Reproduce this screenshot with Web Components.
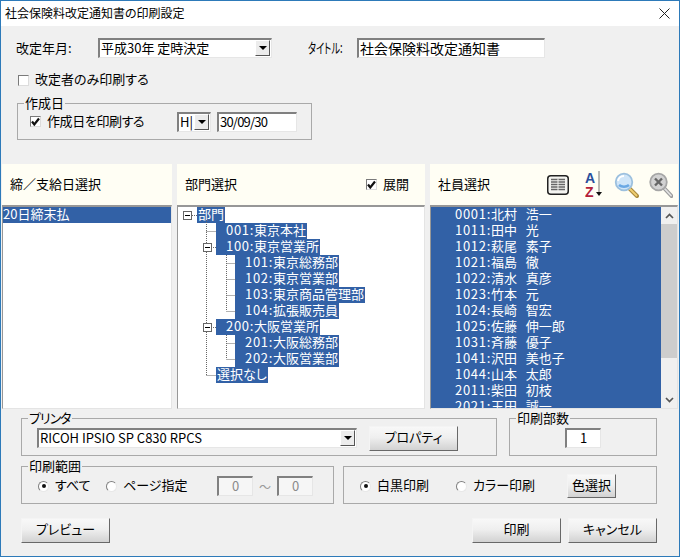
<!DOCTYPE html>
<html lang="ja">
<head>
<meta charset="utf-8">
<title>社会保険料改定通知書の印刷設定</title>
<style>
html, body { margin: 0; background: #f0f0f0; }
body { font: 13px "Noto Sans CJK JP", sans-serif; color: #000; font-feature-settings: "palt"; }
</style>
</head>
<body>
<print-dialog></print-dialog>
<script>
function define(name, css, html, init) {
  const tpl = document.createElement("template");
  tpl.innerHTML = `<style>${css}</style>${html}`;
  customElements.define(name, class extends HTMLElement {
    constructor() {
      super();
      this.attachShadow({ mode: "open" });
      this.shadowRoot.appendChild(tpl.content.cloneNode(true));
    }
    connectedCallback() {
      if (init) init(this, this.shadowRoot);
    }
  });
}

const checkMark = `<svg width="11" height="11" viewBox="0 0 11 11"><path d="M2 5.500 4.300 8.500 9 2.500" fill="none" stroke="#111" stroke-width="2.200"/></svg>`;

define("title-bar", `
  :host { display: flex; align-items: center; justify-content: space-between; height: 25px; box-sizing: border-box; background: #fff;
    padding: 0 9px 2px 4px; font-size: 12px; line-height: 16px; }
  svg { display: block; margin-top: 2px; }
`, `<slot></slot><svg width="11" height="11" viewBox="0 0 11 11"><path d="M.5.5l10 10M10.500.5l-10 10" stroke="#222" fill="none"/></svg>`);

define("group-box", `
  :host { display: flex; align-items: center; position: relative; box-sizing: border-box; border: 1px solid #a9a9a9; height: 38px; padding-top: 2px; }
  span { position: absolute; left: 6px; top: -9px; padding: 0 1px; background: #f0f0f0; line-height: 16px; letter-spacing: var(--legend-spacing, 0); }
`, `<span></span><slot></slot>`, (el, root) => {
  root.querySelector("span").textContent = el.getAttribute("legend");
});

define("text-field", `
  :host { display: block; box-sizing: border-box; height: 20px; padding-left: 1px; background: #fff; line-height: 16px; white-space: nowrap; overflow: hidden;
    border: 2px solid; border-color: #808080 #e6e6e6 #e6e6e6 #808080; border-width: 2px 1px 1px 2px; }
  :host([center]) { text-align: center; padding-left: 0; }
  :host([disabled]) { color: #8a8a8a; background: #f6f6f6; }
`, `<slot></slot>`);

define("combo-box", `
  :host { display: flex; box-sizing: border-box; height: 20px; background: #fff; line-height: 16px; white-space: nowrap;
    border: 2px solid; border-color: #808080 #e6e6e6 #e6e6e6 #808080; border-width: 2px 1px 1px 2px; }
  div { flex: 1; min-width: 0; overflow: hidden; padding-left: 1px; }
  b { flex: none; width: 15px; margin: 0 1px 1px 0; box-sizing: border-box; display: flex; align-items: center; justify-content: center;
    background: #ececec; border: 1px solid; border-color: #fff #555 #555 #fff; }
  i { border: 4px solid transparent; border-top: 4px solid #000; border-bottom: 0; }
`, `<div><slot></slot></div><b><i></i></b>`);

define("check-box", `
  :host { display: inline-flex; align-items: center; gap: 6px; line-height: 16px; white-space: nowrap; }
  span { display: block; box-sizing: border-box; width: 11px; height: 11px; background: #fff; border: 1px solid; border-color: #7a7a7a #dcdcdc #dcdcdc #7a7a7a; }
  svg { display: block; margin: -1px 0 0 -1px; }
  div { margin-top: -2px; }
`, `<span></span><div><slot></slot></div>`, (el, root) => {
  if (el.hasAttribute("checked")) root.querySelector("span").innerHTML = checkMark;
});

define("radio-button", `
  :host { display: inline-flex; align-items: center; gap: 6px; line-height: 16px; white-space: nowrap; }
  span { display: flex; align-items: center; justify-content: center; box-sizing: border-box; width: 11px; height: 11px; border-radius: 50%;
    background: #fff; border: 1px solid; border-color: #808080 #e8e8e8 #e8e8e8 #808080; }
  i { width: 4px; height: 4px; border-radius: 50%; background: #111; }
  div { margin-top: -3px; }
`, `<span></span><div><slot></slot></div>`, (el, root) => {
  if (el.hasAttribute("checked")) root.querySelector("span").innerHTML = "<i></i>";
});

define("push-button", `
  :host { display: flex; align-items: center; justify-content: center; box-sizing: border-box; width: 89px; height: 25px; line-height: 16px; padding-bottom: 3px;
    background: linear-gradient(#f8f8f8, #efefef 45%, #d2d2d2); border: 1px solid; border-color: #f4f4f4 #686868 #686868 #f4f4f4; white-space: nowrap; }
`, `<slot></slot>`);

define("pane-header", `
  :host { display: flex; align-items: center; box-sizing: border-box; height: 41px; padding: 0 5px 0 8px; background: #fffef4; white-space: nowrap; }
  .label { margin-top: -3px; }
  .end { margin-left: auto; display: flex; align-items: center; }
`, `<div class="label"><slot></slot></div><div class="end"><slot name="end"></slot></div>`);

define("list-pane", `
  :host { display: block; position: relative; box-sizing: border-box; height: 204px; overflow: hidden; background: #fff;
    border: 1px solid #e4e4e4; border-top: 2px solid #979797; border-left: 1px solid #979797; }
`, `<slot></slot>`);

define("list-row", `
  :host { display: block; height: 16px; line-height: 13px; padding-left: 24px; white-space: pre; color: #fff; background: #3261a6; }
  :host([flush]) { padding-left: 0; line-height: 14px; }
`, `<slot></slot>`);

define("tree-node", `
  :host { display: block; height: 16px; line-height: 14px; padding-left: calc(19px + 19px * var(--level, 0)); white-space: pre; }
  span { display: inline-block; height: 16px; background: #3261a6; color: #fff; padding-right: 1px; padding-left: 1px; }
  :host([pad]) span { padding-left: 10px; }
`, `<span><slot></slot></span>`, (el) => {
  el.style.setProperty("--level", el.getAttribute("level") || 0);
});

define("scroll-bar", `
  :host { display: flex; flex-direction: column; position: absolute; right: 0; top: 0; bottom: 0; width: 16px; background: #f0f0f0; }
  svg { flex: none; display: block; }
  .btn { height: 17px; display: flex; align-items: center; justify-content: center; }
  .thumb { height: 134px; background: #cdcdcd; }
  .rest { flex: 1; }
`, `<div class="btn"><svg width="9" height="6" viewBox="0 0 9 6"><path d="M1 5l3.500-3.500L8 5" fill="none" stroke="#555" stroke-width="1.700"/></svg></div>
<div class="thumb"></div><div class="rest"></div>
<div class="btn"><svg width="9" height="6" viewBox="0 0 9 6"><path d="M1 1l3.500 3.500L8 1" fill="none" stroke="#555" stroke-width="1.700"/></svg></div>`);

define("tree-view", `
  :host { display: block; position: relative; }
  svg { position: absolute; left: 0; top: 0; }
  .dot { stroke: #666; stroke-dasharray: 1 1; fill: none; }
  .box { fill: #fff; stroke: #666; }
  .minus { stroke: #000; }
`, `<svg width="245" height="198" viewBox="178 207 245 198">
  <path class="dot" d="M192 215.500h5M206.500 220v155M206.500 231.500h10M211 247.500h5M226.500 255v56M226.500 263.500h9M226.500 279.500h9M226.500 295.500h9M226.500 311.500h9M211 327.500h5M226.500 335v24M226.500 343.500h9M226.500 359.500h9M206.500 375.500h10"/>
  <rect class="box" x="183.500" y="211.500" width="8" height="8"/><path class="minus" d="M185 215.500h5"/>
  <rect class="box" x="203.500" y="243.500" width="8" height="8"/><path class="minus" d="M205 247.500h5"/>
  <rect class="box" x="203.500" y="323.500" width="8" height="8"/><path class="minus" d="M205 327.500h5"/>
</svg><slot></slot>`);

define("print-dialog", `
  :host { display: flex; flex-direction: column; box-sizing: border-box; width: 680px; height: 557px; overflow: hidden; background: #f0f0f0; border: 1px solid #2d7ab9; }
  .top { height: 138px; box-sizing: border-box; padding: 12px 0 0 15px; }
  .row1 { display: flex; align-items: center; height: 20px; }
  .lbl-rev { width: 82px; margin-top: -2px; }
  .combo-rev { width: 174px; }
  .lbl-title { margin-left: 36px; width: 49px; margin-top: -2px; }
  .lbl-title span { display: inline-block; font-size: 14px; transform: scaleX(.66); transform-origin: left; white-space: nowrap; }
  .field-title { width: 188px; font-size: 14px; }
  .only { display: flex; margin: 14px 0 0 2px; height: 16px; }
  .made { width: 295px; margin: 15px 0 0 1px; height: 37px; padding: 0 0 0 12px; }
  .made-check { width: 147px; letter-spacing: -.4px; }
  .era { width: 34px; }
  .date { width: 80px; margin-left: 6px; letter-spacing: -.8px; }
  .panes { display: flex; gap: 5px; padding-left: 1px; }
  .p1 { width: 170px; } .p2 { width: 248px; } .p3 { width: 248px; }
  .emp { background: #3261a6; }
  .n { letter-spacing: .7px; }
  .icon-list { margin-right: 16px; } .icon-az { margin-right: 12px; } .icon-find { margin-right: 10px; }
  svg { display: block; }
  .bottom { padding: 9px 22px 0 20px; }
  .line { display: flex; justify-content: space-between; }
  .line + .line { margin-top: 10px; }
  .printer { width: 476px; padding-left: 15px; --legend-spacing: -1px; }
  .printer combo-box { width: 320px; margin-right: 12px; }
  .copies { width: 148px; justify-content: center; }
  .copies text-field { width: 36px; }
  .range { width: 313px; padding-left: 16px; }
  .mono { width: 314px; padding-left: 16px; }
  .r1 { width: 68px; } .r2 { width: 111px; }
  .r3 { width: 96px; } .r4 { width: 111px; }
  .num { width: 36px; }
  .wave { width: 24px; text-align: center; color: #999; font-size: 12px; }
  .pick { width: 49px; height: 24px; }
  .actions { display: flex; gap: 7px; margin-top: 14px; }
  .actions .gap { flex: 1; }
`, `
<title-bar>社会保険料改定通知書の印刷設定</title-bar>
<div class="top">
  <div class="row1">
    <span class="lbl-rev">改定年月:</span>
    <combo-box class="combo-rev">平成30年 定時決定</combo-box>
    <span class="lbl-title"><span>タイトル:</span></span>
    <text-field class="field-title">社会保険料改定通知書</text-field>
  </div>
  <div class="only"><check-box>改定者のみ印刷する</check-box></div>
  <group-box class="made" legend="作成日">
    <check-box class="made-check" checked>作成日を印刷する</check-box>
    <combo-box class="era">H|</combo-box>
    <text-field class="date">30/09/30</text-field>
  </group-box>
</div>
<div class="panes">
  <div class="p1">
    <pane-header>締／支給日選択</pane-header>
    <list-pane><list-row flush>20日締末払</list-row></list-pane>
  </div>
  <div class="p2">
    <pane-header style="padding-right:16px">部門選択
      <check-box slot="end" checked>展開</check-box>
    </pane-header>
    <list-pane>
      <tree-view>
        <tree-node>部門</tree-node>
        <tree-node level="1" pad><span class="n">001:</span>東京本社</tree-node>
        <tree-node level="1" pad><span class="n">100:</span>東京営業所</tree-node>
        <tree-node level="2" pad><span class="n">101:</span>東京総務部</tree-node>
        <tree-node level="2" pad><span class="n">102:</span>東京営業部</tree-node>
        <tree-node level="2" pad><span class="n">103:</span>東京商品管理部</tree-node>
        <tree-node level="2" pad><span class="n">104:</span>拡張販売員</tree-node>
        <tree-node level="1" pad><span class="n">200:</span>大阪営業所</tree-node>
        <tree-node level="2" pad><span class="n">201:</span>大阪総務部</tree-node>
        <tree-node level="2" pad><span class="n">202:</span>大阪営業部</tree-node>
        <tree-node level="1">選択なし</tree-node>
      </tree-view>
    </list-pane>
  </div>
  <div class="p3">
    <pane-header>社員選択
      <svg slot="end" class="icon-list" width="22" height="20" viewBox="0 0 22 20">
        <rect x=".75" y=".75" width="20.500" height="18.500" rx="3" fill="#f4f4f0" stroke="#222" stroke-width="1.500"/>
        <path d="M4 4.500h14M4 7h14M4 9.500h14M4 12h14M4 14.500h14" stroke="#666" stroke-width="1.300"/>
        <path d="M11 3.500v12.500" stroke="#f4f4f0"/>
      </svg>
      <svg slot="end" class="icon-az" width="17" height="35" viewBox="0 -4 17 35">
        <text x="0" y="12" font-family="Liberation Sans" font-weight="700" font-size="14" fill="#2a4f9c">A</text>
        <text x="0" y="26" font-family="Liberation Sans" font-weight="700" font-size="14" fill="#b3213a">Z</text>
        <path d="M14 0v23" stroke="#777"/><path d="M11 21h6l-3 4z" fill="#111"/>
      </svg>
      <svg slot="end" class="icon-find" width="25" height="26" viewBox="0 0 25 26">
        <path d="M15 16l8 8" stroke="#a98a3c" stroke-width="4" stroke-linecap="round"/>
        <path d="M15.500 16.500l7 7" stroke="#f0cf72" stroke-width="1.800" stroke-linecap="round"/>
        <circle cx="10" cy="10" r="8.300" fill="#cfe5f8" stroke="#9cc0de" stroke-width="1.800"/>
        <path d="M4 9a6 6 0 0 1 6-5" fill="none" stroke="#fff" stroke-width="2"/>
        <path d="M5 13a7 6 0 0 0 10 0" fill="none" stroke="#6aa8e4" stroke-width="2.500"/>
      </svg>
      <svg slot="end" width="24" height="26" viewBox="0 0 24 26">
        <path d="M15 16l7.500 8" stroke="#9a9a9a" stroke-width="4" stroke-linecap="round"/>
        <path d="M15.500 16.500l6.500 7" stroke="#e2e2e2" stroke-width="1.800" stroke-linecap="round"/>
        <circle cx="9.500" cy="10" r="8.300" fill="#d2d2d2" stroke="#a6a6a6" stroke-width="1.800"/>
        <path d="M6 6.500l7 7M13 6.500l-7 7" stroke="#666" stroke-width="2.400"/>
      </svg>
    </pane-header>
    <list-pane class="emp">
      <list-row><span class="n">0001:</span>北村   浩一</list-row>
      <list-row><span class="n">1011:</span>田中   光</list-row>
      <list-row><span class="n">1012:</span>萩尾   素子</list-row>
      <list-row><span class="n">1021:</span>福島   徹</list-row>
      <list-row><span class="n">1022:</span>清水   真彦</list-row>
      <list-row><span class="n">1023:</span>竹本   元</list-row>
      <list-row><span class="n">1024:</span>長崎   智宏</list-row>
      <list-row><span class="n">1025:</span>佐藤   伸一郎</list-row>
      <list-row><span class="n">1031:</span>斉藤   優子</list-row>
      <list-row><span class="n">1041:</span>沢田   美也子</list-row>
      <list-row><span class="n">1044:</span>山本   太郎</list-row>
      <list-row><span class="n">2011:</span>柴田   初枝</list-row>
      <list-row><span class="n">2021:</span>玉田   誠一</list-row>
      <scroll-bar></scroll-bar>
    </list-pane>
  </div>
</div>
<div class="bottom">
  <div class="line">
    <group-box class="printer" legend="プリンタ">
      <combo-box>RICOH IPSIO SP C830 RPCS</combo-box>
      <push-button>プロパティ</push-button>
    </group-box>
    <group-box class="copies" legend="印刷部数"><text-field center>1</text-field></group-box>
  </div>
  <div class="line">
    <group-box class="range" legend="印刷範囲">
      <radio-button class="r1" checked>すべて</radio-button>
      <radio-button class="r2">ページ指定</radio-button>
      <text-field class="num" center disabled>0</text-field>
      <span class="wave">〜</span>
      <text-field class="num" center disabled>0</text-field>
    </group-box>
    <group-box class="mono">
      <radio-button class="r3" checked>白黒印刷</radio-button>
      <radio-button class="r4">カラー印刷</radio-button>
      <push-button class="pick">色選択</push-button>
    </group-box>
  </div>
  <div class="actions">
    <push-button>プレビュー</push-button>
    <span class="gap"></span>
    <push-button>印刷</push-button>
    <push-button>キャンセル</push-button>
  </div>
</div>
`);
</script>
</body>
</html>
